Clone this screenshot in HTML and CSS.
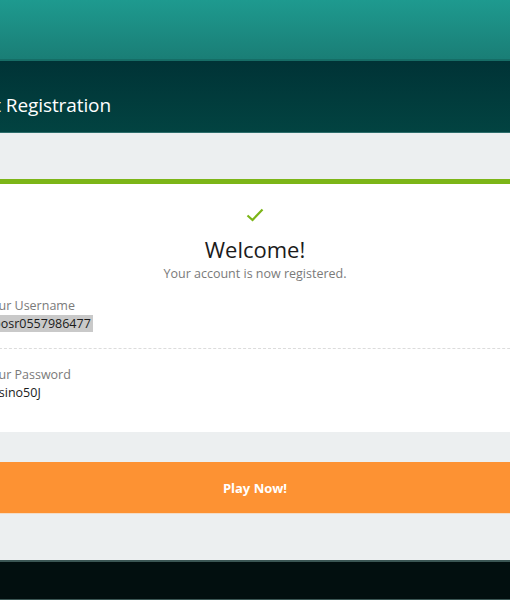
FILE: index.html
```html
<!DOCTYPE html>
<html lang="en">
<head>
<meta charset="utf-8">
<title>Account Registration</title>
<link rel="stylesheet" href="styles.css">
</head>
<body>
<div class="page">
  <header class="topbar"></header>
  <div class="titlebar"><h1>Account Registration</h1></div>
  <main class="content">
    <section class="card">
      <div class="check">
        <svg width="18" height="14" viewBox="0 0 18 14"><path d="M1.5 7.5 L6.5 12 L16.5 1.5" fill="none" stroke="#7cb518" stroke-width="2.2"/></svg>
      </div>
      <h2>Welcome!</h2>
      <p class="sub">Your account is now registered.</p>
      <div class="field first">
        <div class="label">Your Username</div>
        <div class="value"><span class="hl">Gbosr0557986477</span></div>
      </div>
      <div class="field">
        <div class="label">Your Password</div>
        <div class="value">Casino50J</div>
      </div>
    </section>
    <button class="play">Play Now!</button>
  </main>
  <footer class="footer"></footer>
</div>
</body>
</html>
```
FILE: styles.css
```css
html, body {
  margin: 0;
  padding: 0;
  overflow: hidden;
  background: #eceff0;
}
body {
  font-family: "Open Sans", "Noto Sans", sans-serif;
  width: 510px;
  height: 600px;
}
.page {
  width: 630px;
  margin-left: -60px;
}
.topbar {
  height: 59px;
  background: linear-gradient(#1e9a8f, #1a7e76);
  border-bottom: 2px solid #166d66;
}
.titlebar {
  height: 71px;
  background: linear-gradient(#003336, #024341);
  border-bottom: 1px solid #2d6d6b;
  display: flex;
  align-items: center;
}
.titlebar h1 {
  margin: 16px 0 0 -10px;
  font-weight: 400;
  font-size: 19px;
  color: #ffffff;
  letter-spacing: -0.1px;
}
.content {
  padding: 46px 0 46px;
  background: #eceff0;
}
.card {
  background: #ffffff;
  border-top: 5px solid #7cb518;
  height: 248px;
  padding: 0 44px;
  box-sizing: content-box;
  text-align: center;
}
.check {
  padding-top: 24px;
  height: 14px;
  line-height: 0;
}
.card h2 {
  margin: 13px 0 0;
  font-size: 22px;
  font-weight: 400;
  line-height: 28px;
  color: #1b1b1b;
}
.sub {
  margin: 2px 0 0;
  font-size: 12.5px;
  line-height: 18px;
  color: #7a7a7a;
}
.field {
  text-align: left;
  padding: 17px 0 0;
}
.field.first {
  padding-top: 14px;
  padding-bottom: 15px;
  border-bottom: 1px dashed #dcdcdc;
  margin-right: -44px;
}
.label {
  font-size: 12.5px;
  line-height: 18px;
  color: #7a7a7a;
}
.value {
  font-size: 12.5px;
  line-height: 18px;
  color: #1b1b1b;
}
.hl {
  background: #c9c9c9;
  padding: 0 2px 0 0;
}
.play {
  display: block;
  width: 100%;
  margin-top: 30px;
  height: 52px;
  border: 0;
  border-bottom: 1px solid #f3dcc6;
  background: #fd9233;
  color: #ffffff;
  font-family: inherit;
  font-weight: 700;
  font-size: 13px;
}
.footer {
  height: 37px;
  background: #020f0f;
  border-top: 2px solid #3b5654;
  border-bottom: 2px solid #3b5654;
}
```
